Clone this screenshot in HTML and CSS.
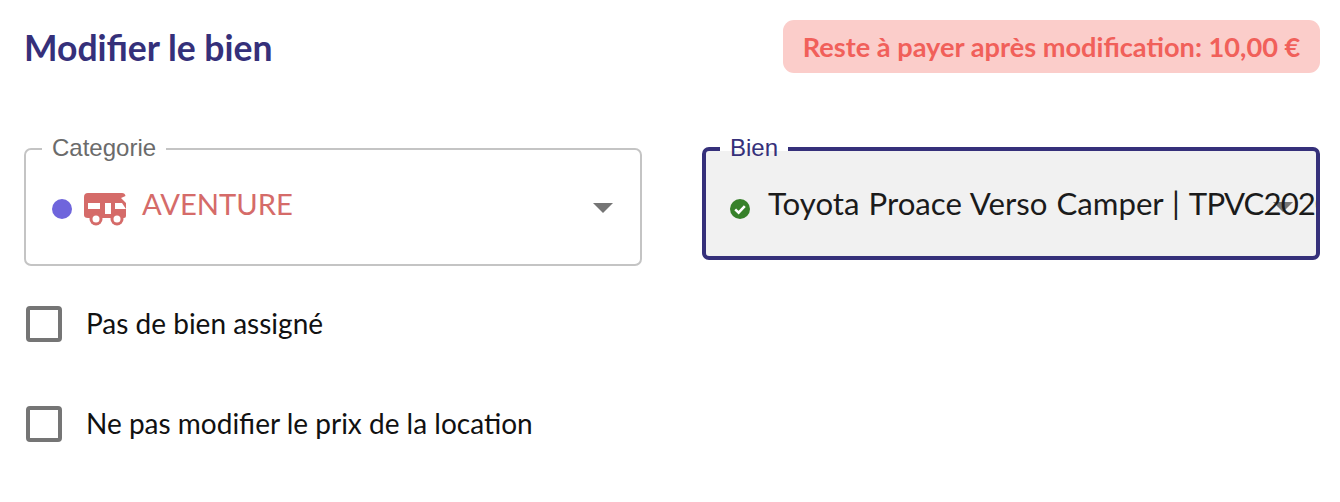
FILE: index.html
```html
<!DOCTYPE html>
<html lang="fr">
<head>
    <meta charset="UTF-8">
    <title>Modifier le bien</title>
    <link rel="stylesheet" href="styles.css">
</head>
<body>
    <div class="header">
        <h1>Modifier le bien</h1>
        <div class="badge">Reste à payer après modification: 10,00 €</div>
    </div>

    <div class="fields">
        <fieldset class="field">
            <legend>Categorie</legend>
            <div class="value value-category">
                <span class="dot"></span>
                <svg class="van" width="43" height="33" viewBox="0 0 43 33">
                    <path fill="#d56b69" d="M4 0H38Q41 0 41.5 3L37 5L42 10V23Q42 25 40 25H4Q0 25 0 22V4Q0 0 4 0Z"/>
                    <path fill="#fff" d="M4 10H16V16H4ZM21 10H27V21H21ZM31 10H38L42 16H31Z"/>
                    <circle cx="12" cy="26" r="6.5" fill="#d56b69"/>
                    <circle cx="12" cy="26" r="3.5" fill="#fff"/>
                    <circle cx="33" cy="26" r="6.5" fill="#d56b69"/>
                    <circle cx="33" cy="26" r="3.5" fill="#fff"/>
                </svg>
                <span class="name category-name">AVENTURE</span>
            </div>
            <span class="arrow"></span>
        </fieldset>

        <fieldset class="field field-active">
            <legend>Bien</legend>
            <div class="value">
                <svg class="check" width="20" height="20" viewBox="0 0 20 20">
                    <circle cx="10" cy="10" r="10" fill="#37812a"/>
                    <path d="M5.2 10.4L8.6 13.6L14.8 7.2" fill="none" stroke="#fff" stroke-width="2.6"/>
                </svg>
                <span class="name item-name">Toyota Proace Verso Camper | <span class="item-code">TPVC2020</span></span>
            </div>
            <span class="arrow"></span>
        </fieldset>
    </div>

    <label class="option"><span class="box"></span><span class="option-text">Pas de bien assigné</span></label>
    <label class="option"><span class="box"></span><span class="option-text">Ne pas modifier le prix de la location</span></label>
</body>
</html>
```

FILE: styles.css
```css
body {
    margin: 0;
    padding: 20px 20px 0 24px;
    background-color: white;
    font-family: Lato, "Noto Sans", sans-serif;
    color: #1b1b1b;
}

.header {
    display: flex;
    justify-content: space-between;
    align-items: center;
    height: 53px;
    margin-bottom: 62px;
}

h1 {
    margin: 0;
    padding-top: 2px;
    font-size: 35.5px;
    font-weight: 700;
    color: #35307a;
}

.badge {
    display: flex;
    align-items: center;
    justify-content: center;
    width: 537px;
    height: 53px;
    border-radius: 11px;
    background-color: #fbcdca;
    color: #f1605a;
    font-size: 27.2px;
    font-weight: 700;
}

.fields {
    display: grid;
    grid-template-columns: 618px 618px;
    column-gap: 60px;
    align-items: start;
    margin-bottom: 40px;
}

.field {
    position: relative;
    box-sizing: border-box;
    min-width: 0;
    height: 131px;
    margin: 0;
    padding: 0 0 0 26px;
    border: 2px solid #c4c4c4;
    border-radius: 7px;
}

.field legend {
    padding: 0 10px 2px;
    margin-left: -10px;
    font-family: "Liberation Sans", Arial, sans-serif;
    font-size: 24px;
    line-height: 26px;
    color: #6b6b6b;
}

.field-active {
    height: 125px;
    border: 4px solid #35307a;
    background-color: #f1f1f1;
    background-clip: padding-box;
    padding-left: 24px;
    overflow: hidden;
}

.field-active legend {
    color: #35307a;
}

.value {
    position: relative;
    z-index: 1;
    display: flex;
    align-items: center;
    height: 92px;
    white-space: nowrap;
}

.name {
    padding-bottom: 12px;
}

.dot {
    flex: none;
    width: 20px;
    height: 20px;
    border-radius: 50%;
    background-color: #6f65dc;
    margin-right: 12px;
}

.van {
    flex: none;
    margin-right: 15px;
}

.category-name {
    font-size: 29.2px;
    color: #d56b69;
}

.item-name {
    font-size: 31.2px;
    word-spacing: 1px;
}

.item-code {
    letter-spacing: -0.9px;
}

.check {
    flex: none;
    margin-right: 18px;
}

.arrow {
    position: absolute;
    right: 27px;
    top: 40px;
    border-left: 10px solid transparent;
    border-right: 10px solid transparent;
    border-top: 10px solid #757575;
}

.field-active .arrow {
    top: 39px;
    right: 23px;
}

.option {
    display: flex;
    align-items: center;
    height: 36px;
    margin-bottom: 64px;
    font-size: 28px;
    color: #111;
}

.option-text {
    padding-bottom: 2px;
}

.box {
    box-sizing: border-box;
    width: 36px;
    height: 36px;
    margin: 0 24px 0 2px;
    border: 4px solid #757575;
    border-radius: 4px;
}
```
